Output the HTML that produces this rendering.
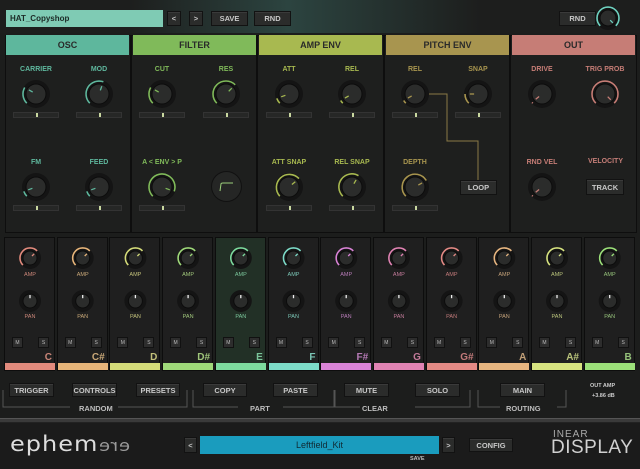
<!DOCTYPE html><html><head><meta charset="utf-8"><style>
*{margin:0;padding:0;box-sizing:border-box}
body{width:640px;height:469px;background:#1c1d1c;font-family:"Liberation Sans",sans-serif;position:relative;overflow:hidden;color:#ccc}
.a{position:absolute}
.btn{position:absolute;background:#2b2c2b;border:1px solid #121212;color:#c8c8c8;font-size:7.5px;font-weight:bold;display:flex;align-items:center;justify-content:center;box-shadow:inset 0 1px 0 #3a3a3a}
.hdr{position:absolute;top:35px;height:20px;font-size:9px;font-weight:bold;color:#2a2a2a;display:flex;align-items:center;justify-content:center}
.sec{position:absolute;top:35px;height:198px;background:#1e1f1e;border:1px solid #0e0e0e}
.lbl{position:absolute;font-size:7px;font-weight:bold;text-align:center;width:60px;margin-left:-30px}
.sl{position:absolute;width:46px;height:6px;margin-left:-23px;background:#262726;border:1px solid #333}
.sl i{position:absolute;left:22px;top:0;width:2px;height:4px;background:#c9d8a0}
.ch{position:absolute;top:237px;height:134px;width:51px;background:#1f1f1f;border:1px solid #0d0d0d}
.ms{position:absolute;width:11px;height:11px;background:#2d2d2d;border:1px solid #111;font-size:5px;color:#bbb;display:flex;align-items:center;justify-content:center}
.gl{position:absolute;font-size:7.5px;font-weight:bold;color:#bdbdbd}
</style></head><body>
<div class="a" style="left:0;top:0;width:640px;height:33px;background:linear-gradient(90deg,#1d1e1d 20%,#2c4440 45%,#1d1e1d 75%)"></div>
<div class="a" style="left:6px;top:10px;width:157px;height:17px;background:#7fcbb4;font-size:8px;font-weight:bold;color:#1c2a26;padding:4px 0 0 4px">HAT_Copyshop</div>
<div class="btn" style="left:167px;top:11px;width:14px;height:15px">&lt;</div>
<div class="btn" style="left:189px;top:11px;width:14px;height:15px">&gt;</div>
<div class="btn" style="left:211px;top:11px;width:37px;height:15px">SAVE</div>
<div class="btn" style="left:254px;top:11px;width:37px;height:15px">RND</div>
<div class="btn" style="left:559px;top:11px;width:37px;height:15px">RND</div>
<div class="sec" style="left:5px;width:126px"></div><div class="sec" style="left:131px;width:126px"></div><div class="sec" style="left:257px;width:127px"></div><div class="sec" style="left:384px;width:126px"></div><div class="sec" style="left:510px;width:127px"></div>
<div class="hdr" style="left:6px;width:123px;background:#5eb79d">OSC</div>
<div class="hdr" style="left:133px;width:123px;background:#80ba5a">FILTER</div>
<div class="hdr" style="left:259px;width:123px;background:#a8b950">AMP ENV</div>
<div class="hdr" style="left:386px;width:123px;background:#a8954f">PITCH ENV</div>
<div class="hdr" style="left:512px;width:123px;background:#c67d76">OUT</div>
<svg class="a" style="left:0;top:0" width="640" height="469"><polyline points="427,94 447,94 447,141 478,141 478,180" fill="none" stroke="#8a7a45" stroke-width="1"/></svg>
<div class="btn" style="left:460px;top:180px;width:37px;height:15px">LOOP</div>
<div class="gl" style="left:588px;top:158px;color:#c47d77;font-size:7px">VELOCITY</div>
<div class="btn" style="left:586px;top:179px;width:38px;height:16px">TRACK</div>
<div class="a" style="left:212px;top:172px;width:29px;height:29px;border-radius:50%;background:#252625;box-shadow:0 0 0 1px #111"><svg width="29" height="29"><path d="M8 19 L9 12 Q9 11 11 11 L21 11" fill="none" stroke="#9bcf7a" stroke-width="1"/></svg></div>
<div id="k"></div>
<div class="btn" style="left:9px;top:383px;width:45px;height:14px">TRIGGER</div>
<div class="btn" style="left:72px;top:383px;width:45px;height:14px">CONTROLS</div>
<div class="btn" style="left:136px;top:383px;width:44px;height:14px">PRESETS</div>
<div class="btn" style="left:203px;top:383px;width:44px;height:14px">COPY</div>
<div class="btn" style="left:273px;top:383px;width:45px;height:14px">PASTE</div>
<div class="btn" style="left:344px;top:383px;width:45px;height:14px">MUTE</div>
<div class="btn" style="left:415px;top:383px;width:45px;height:14px">SOLO</div>
<div class="btn" style="left:500px;top:383px;width:45px;height:14px">MAIN</div>
<svg class="a" style="left:0;top:0" width="640" height="469" fill="none" stroke="#555"><path d="M3 390V407H70M118 407H187V390M193 390V407H238M283 407H334V390M335 390V407H360M415 407H470V390M478 390V407H500M557 407H566V390"/></svg>
<div class="gl" style="left:79px;top:404px">RANDOM</div><div class="gl" style="left:250px;top:404px">PART</div><div class="gl" style="left:362px;top:404px">CLEAR</div><div class="gl" style="left:506px;top:404px">ROUTING</div>
<div class="a" style="left:590px;top:383px;font-size:5.5px;font-weight:bold;color:#ccc">OUT AMP</div>
<div class="a" style="left:592px;top:393px;font-size:5.5px;font-weight:bold;color:#ccc">+3.86 dB</div>
<div class="a" style="left:0;top:418px;width:640px;height:5px;background:#3a3a3a;border-top:1px solid #555;border-bottom:1px solid #222"></div>
<div class="a" style="left:0;top:423px;width:640px;height:46px;background:#1b1b1b"></div>
<div class="a" style="left:10px;top:430px;font-size:24px;color:#ddd;font-family:'DejaVu Sans',sans-serif;letter-spacing:1px;transform:scaleY(0.9)">ephem<span style="color:#999;font-size:18px;display:inline-block;transform:scaleX(-1)">ere</span></div>
<div class="btn" style="left:184px;top:437px;width:13px;height:16px">&lt;</div>
<div class="a" style="left:200px;top:436px;width:239px;height:18px;background:#1a9cbe;font-size:9px;color:#102a33;display:flex;align-items:center;justify-content:center">Leftfield_Kit</div>
<div class="btn" style="left:442px;top:437px;width:13px;height:16px">&gt;</div>
<div class="a" style="left:410px;top:456px;font-size:5.5px;font-weight:bold;color:#bbb">SAVE</div>
<div class="btn" style="left:469px;top:438px;width:44px;height:14px">CONFIG</div>
<div class="a" style="left:553px;top:429px;font-size:10px;color:#aaa;letter-spacing:1px">INEAR</div>
<div class="a" style="left:551px;top:437px;font-size:19px;color:#d0d0d0;letter-spacing:0.5px">DISPLAY</div>
<script>
function knob(x,y,r,col,a0,a1,ind){var R=r+2;var s='';var p=function(a,rr){var t=(a-90)*Math.PI/180;return [(x+rr*Math.cos(t)).toFixed(1),(y+rr*Math.sin(t)).toFixed(1)]};
var A=p(a0,R),B=p(a1,R),lg=(a1-a0)>180?1:0;
s+='<circle cx="'+x+'" cy="'+y+'" r="'+(R+1)+'" fill="#141414"/>';
if(col)s+='<path d="M'+A+' A'+R+' '+R+' 0 '+lg+' 1 '+B+'" stroke="'+col+'" stroke-width="1.6" fill="none"/>';
s+='<circle cx="'+x+'" cy="'+y+'" r="'+(r-1)+'" fill="#2b2c2b" stroke="#0c0c0c"/>';
var i1=p(ind,r*0.35),i2=p(ind,r*0.75);s+='<line x1="'+i1[0]+'" y1="'+i1[1]+'" x2="'+i2[0]+'" y2="'+i2[1]+'" stroke="'+(col||'#eee')+'" stroke-width="1.3"/>';return s;}
var sv='';var dv='';
var secs=[['#5fb89e',[36,99],['CARRIER','MOD'],['FM','FEED']],['#80ba5a',[162,226],['CUT','RES'],['A &lt; ENV &gt; P','']],['#a8b950',[289,352],['ATT','REL'],['ATT SNAP','REL SNAP']],['#a8954f',[415,478],['REL','SNAP'],['DEPTH','']],['#c67d76',[542,605],['DRIVE','TRIG PROB'],['RND VEL','']]];
var vals=[[[-135,-60],[-135,20]],[[-135,-60],[-135,45]],[[-135,-110],[-135,-120]],[[-135,-120],[-135,-90]],[[-135,-130],[-135,135]]];
secs.forEach(function(s,i){for(var j=0;j<2;j++){var x=s[1][j];
dv+='<div class="lbl" style="left:'+x+'px;top:66px;color:'+s[0]+'">'+s[2][j]+'</div>';
var v=vals[i][j];sv+=knob(x,94,11,s[0],v[0],v[1],v[1]);
if(i<4)dv+='<div class="sl" style="left:'+x+'px;top:112px"><i></i></div>';
if(s[3][j]){dv+='<div class="lbl" style="left:'+x+'px;top:159px;color:'+s[0]+'">'+s[3][j]+'</div>';
var w=[[[-135,-110],[-135,-110]],[[-135,110],0],[[-135,50],[-135,30]],[[-135,60],0],[[-135,-130],0]][i][j];
sv+=knob(x,187,11,s[0],w[0],w[1],w[1]);
if(i<4)dv+='<div class="sl" style="left:'+x+'px;top:205px"><i></i></div>';}}});
var cc=['#e28b7d','#e7b57a','#d4db7a','#9fd97a','#7ddb9e','#7ddbc8','#d983d6','#e083b3','#e38a85','#e6b580','#d7e380','#9ce07a'];
var lc=['#c98578','#c9a878','#c2c07a','#9fc57a','#7ac59a','#7ac5b5','#b57ab5','#c27a99','#c27a7a','#c2a078','#b8c27a','#95c27a'];
var nm=['C','C#','D','D#','E','F','F#','G','G#','A','A#','B'];
for(var c=0;c<12;c++){var x=4+c*52.7;var cx=x+26;
dv+='<div class="ch" style="left:'+x+'px;'+(c==4?'background:#223026':'')+'"></div>';
dv+='<div class="a" style="left:'+(x+1)+'px;top:363px;width:50px;height:7px;background:'+cc[c]+'"></div>';
dv+='<div class="a" style="left:'+(x+32)+'px;top:352px;width:16px;text-align:right;font-size:10px;font-weight:bold;color:'+lc[c]+'">'+nm[c]+'</div>';
dv+='<div class="lbl" style="left:'+cx+'px;top:272px;font-size:5.5px;font-weight:normal;color:'+lc[c]+'">AMP</div>';
dv+='<div class="lbl" style="left:'+cx+'px;top:314px;font-size:5.5px;font-weight:normal;color:'+lc[c]+'">PAN</div>';
dv+='<div class="ms" style="left:'+(x+8)+'px;top:337px">M</div><div class="ms" style="left:'+(x+34)+'px;top:337px">S</div>';
sv+=knob(cx,258,8,cc[c],-135,45,45);sv+=knob(cx,301,8,null,0,0,0);}
sv+=knob(608,18,9,'#6fd2c0',-135,135,135);
document.getElementById('k').innerHTML=dv+'<svg class="a" style="left:0;top:0" width="640" height="469">'+sv+'</svg>';
</script>
</body></html>
